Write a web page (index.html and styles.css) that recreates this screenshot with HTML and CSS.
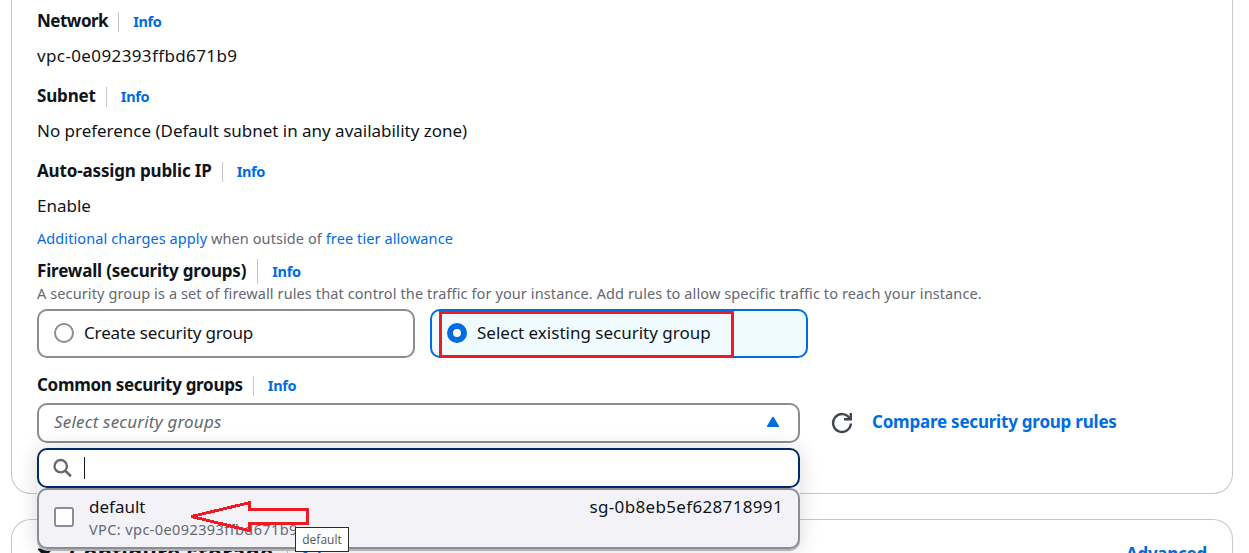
FILE: index.html
```html
<!DOCTYPE html>
<html lang="en">
<head>
<meta charset="utf-8">
<title>Network settings</title>
<link rel="stylesheet" href="styles.css">
</head>
<body>
<main class="page">
  <section class="panel network">
    <div class="field">
      <div class="label"><b class="t-network">Network</b><a class="info">Info</a></div>
      <div class="value t-vpc">vpc-0e092393ffbd671b9</div>
    </div>
    <div class="field">
      <div class="label"><b class="t-subnet">Subnet</b><a class="info">Info</a></div>
      <div class="value t-pref">No preference (Default subnet in any availability zone)</div>
    </div>
    <div class="field last">
      <div class="label"><b class="t-auto">Auto-assign public IP</b><a class="info">Info</a></div>
      <div class="value t-enable">Enable</div>
    </div>
    <div class="hint t-charges"><a>Additional charges apply</a> when outside of <a>free tier allowance</a></div>
    <div class="label tall"><b class="t-firewall">Firewall (security groups)</b><a class="info">Info</a></div>
    <div class="hint t-desc">A security group is a set of firewall rules that control the traffic for your instance. Add rules to allow specific traffic to reach your instance.</div>
    <div class="tiles">
      <div class="tile"><span class="radio"></span><span class="t-create">Create security group</span></div>
      <div class="tile selected"><span class="radio"></span><span class="t-existing">Select existing security group</span><span class="highlight"></span></div>
    </div>
    <div class="label"><b class="t-common">Common security groups</b><a class="info">Info</a></div>
    <div class="select-row">
      <div class="select">
        <span class="placeholder">Select security groups</span>
        <svg class="caret" width="14" height="12" viewBox="0 0 14 12"><path d="M7 1.5 12.3 10.3H1.7Z" fill="#006ce0" stroke="#006ce0" stroke-width="1.6" stroke-linejoin="round"/></svg>
        <div class="dropdown">
          <div class="search">
            <svg width="20" height="20" viewBox="0 0 20 20" fill="none" stroke="#656871" stroke-width="2.3"><circle cx="7.700" cy="8.2" r="6.2"/><path d="M12.1 12.6 17.9 18.2" stroke-width="2.7"/></svg>
            <span class="cursor"></span>
          </div>
          <div class="option">
            <span class="checkbox"></span>
            <div class="option-text"><span class="t-default">default</span><span class="sub">VPC: vpc-0e092393ffbd671b9</span></div>
            <span class="sg">sg-0b8eb5ef628718991</span>
          </div>
          <svg class="arrow" width="124" height="34" viewBox="0 0 124 34"><path d="M4.500 16.500 62 2.800V9.500H120.500V23.500H62V30.500Z" fill="none" stroke="#ed1c24" stroke-width="3" shape-rendering="crispEdges"/></svg>
          <span class="tooltip">default</span>
        </div>
      </div>
      <svg class="refresh" width="22" height="22" viewBox="0 0 22 22" fill="none" stroke="#424650" stroke-width="2.4"><path d="M18.400 6A8.900 8.900 0 1 0 19.900 11.500"/><path d="M19.800 1V7.300H13"/></svg>
      <a class="compare">Compare security group rules</a>
    </div>
  </section>
  <section class="panel storage">
    <svg class="expand" width="16" height="10" viewBox="0 0 16 10"><path d="M1 1H15L8 9Z" fill="#0f141a" stroke="#0f141a" stroke-linejoin="round"/></svg>
    <b class="storage-title">Configure storage</b><a class="info">Info</a>
    <a class="advanced">Advanced</a>
  </section>
</main>
</body>
</html>
```

FILE: styles.css
```css
* { box-sizing: border-box; }
html, body { margin: 0; height: 553px; overflow: hidden; }
body { background: #fff; color: #0f141a; font: 17px/25px "Noto Sans", "Open Sans", sans-serif; white-space: nowrap; }
a { color: #006ce0; }
.page { width: 1222px; margin-left: 11px; height: 553px; }
.panel { border: 1px solid #c6c6cd; padding: 0 25px; }
.network { height: 494px; border-top: 0; border-radius: 0 0 20px 20px; padding-top: 9px; }
.field { height: 75px; display: flex; flex-direction: column; gap: 10px; }
.field.last { height: 70px; }
.label { display: flex; align-items: center; height: 25px; }
.label b { line-height: 23px; padding-bottom: 2px; }
.value { line-height: 23px; }
.info { font-size: 14.5px; font-weight: 700; line-height: 18px; padding: 0 0 2px 14px; margin-left: 10px; border-left: 1px solid #c6c6cd; letter-spacing: -.35px; }
.tall .info { line-height: 25px; padding-bottom: 0; margin-left: 11px; }
.hint { font-size: 14.5px; line-height: 18px; padding-bottom: 2px; color: #656871; }
.t-network { letter-spacing: -.5px; }
.t-subnet { letter-spacing: -.15px; }
.t-auto { letter-spacing: -.15px; }
.t-firewall { letter-spacing: -.18px; }
.t-common { letter-spacing: -.3px; }
.t-vpc { letter-spacing: .38px; }
.t-pref { letter-spacing: -.02px; }
.t-desc { letter-spacing: .11px; }
.t-create { letter-spacing: -.14px; }
.t-charges { margin-bottom: 10px; letter-spacing: .09px; }
.tiles { display: flex; gap: 15px; margin: 5px 0 15px; }
.tile { position: relative; width: 378px; height: 49px; border: 2px solid #8c8c94; border-radius: 10px; display: flex; align-items: center; gap: 10px; padding: 0 15px 1px; }
.t-create, .t-existing { padding-bottom: 2px; }
.tile.selected { border-color: #006ce0; background: #f0fbff; }
.radio { width: 20px; height: 20px; border: 2px solid #8c8c94; border-radius: 50%; background: #fff; }
.selected .radio { border: 6px solid #006ce0; }
.highlight { position: absolute; left: 7px; top: 0; width: 295px; height: 47px; border: 3px solid #ed1c24; }
.select-row { display: flex; align-items: center; margin-top: 5px; height: 40px; }
.select { position: relative; width: 763px; height: 40px; border: 2px solid #8c8c94; border-radius: 10px; display: flex; align-items: center; justify-content: space-between; padding: 0 18px 3px 15px; }
.placeholder { font-style: italic; color: #656871; letter-spacing: .2px; }
.dropdown { position: absolute; left: -2px; top: 43px; width: 763px; height: 101px; background: #f2f2f7; border-radius: 10px; box-shadow: 0 2px 0 #b4b4bb, 0 1px 20px 1px rgba(0,7,22,.14); }
.search { height: 40px; border: 2px solid #002b66; border-radius: 10px; background: #fff; display: flex; align-items: center; padding-left: 14px; }
.cursor { width: 1px; height: 22px; margin-left: 11px; background: #0f141a; }
.option { height: 61px; border: 2px solid #8c8c94; border-radius: 10px; background: #f2f2f7; display: flex; padding: 4px 15px; }
.checkbox { width: 20px; height: 20px; margin: 13px 15px 0 0; border: 2px solid #8c8c94; border-radius: 3px; background: #fff; }
.option-text { flex: 1; display: flex; flex-direction: column; }
.sub { color: #656871; font-size: 14.5px; line-height: 20px; letter-spacing: .4px; }
.sg { letter-spacing: .34px; }
.arrow { position: absolute; left: 150px; top: 52px; width: 124px; }
.tooltip { position: absolute; left: 258px; top: 79px; width: 54px; height: 25px; border: 1px solid #2b2b2b; background: #fff; color: #575757; font: 12px/24px "Open Sans", sans-serif; text-align: center; }
.refresh { margin-left: 31px; }
.compare { margin-left: 19px; padding-bottom: 3px; font-weight: 700; letter-spacing: -.22px; }
.storage { margin-top: 25px; height: 34px; border-bottom: 0; border-radius: 20px 20px 0 0; display: flex; align-items: flex-start; padding-top: 20px; overflow: hidden; }
.expand { margin-top: 8px; flex: none; }
.storage-title { font-size: 22px; margin: 0 0 0 16px; letter-spacing: .4px; }
.storage .info { margin: 6px 0 0 14px; }
.advanced { margin: 1px 0 0 auto; font-weight: 700; letter-spacing: -.25px; }
```
